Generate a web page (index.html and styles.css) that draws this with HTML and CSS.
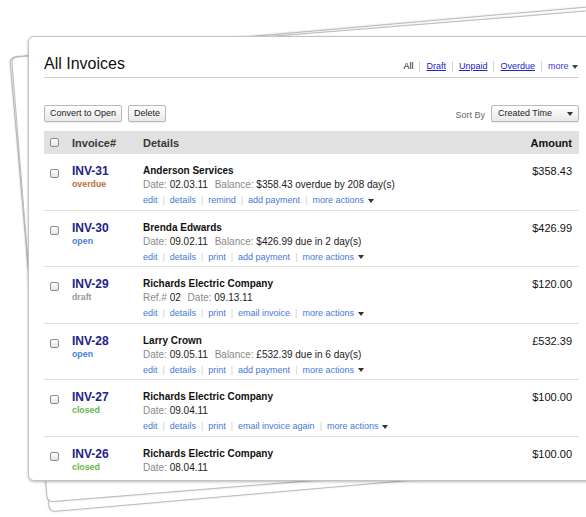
FILE: index.html
```html
<!DOCTYPE html>
<html>
<head>
<meta charset="utf-8">
<title>All Invoices</title>
<link rel="stylesheet" href="styles.css">
</head>
<body>
<div class="stack">
  <div class="sheet sheet-a"></div>
  <div class="sheet sheet-b"></div>
  <div class="card">
    <div class="content">
      <div class="title-row">
        <h1 class="title">All Invoices</h1>
        <nav class="filters">
          <span class="filter current">All</span>
          <a class="filter" href="#">Draft</a>
          <a class="filter" href="#">Unpaid</a>
          <a class="filter" href="#">Overdue</a>
          <span class="filter more">more <i class="caret"></i></span>
        </nav>
      </div>
      <div class="toolbar">
        <div class="actions">
          <button class="btn">Convert to Open</button>
          <button class="btn">Delete</button>
        </div>
        <div class="sort">
          <span class="sort-label">Sort By</span>
          <div class="select">Created Time <i class="caret dark"></i></div>
        </div>
      </div>
      <div class="table">
        <div class="row head">
          <div class="c-check"><input type="checkbox" class="cb"></div>
          <div class="c-num">Invoice#</div>
          <div class="c-det">Details</div>
          <div class="c-amt">Amount</div>
        </div>

        <div class="row">
          <div class="c-check"><input type="checkbox" class="cb"></div>
          <div class="c-num"><a class="inv" href="#">INV-31</a><div class="status overdue">overdue</div></div>
          <div class="c-det">
            <div class="cust">Anderson Services</div>
            <div class="meta"><span class="lbl">Date:</span> 02.03.11 <span class="gap"></span><span class="lbl">Balance:</span> $358.43 overdue by 208 day(s)</div>
            <div class="links"><a href="#">edit</a><span class="sep">|</span><a href="#">details</a><span class="sep">|</span><a href="#">remind</a><span class="sep">|</span><a href="#">add payment</a><span class="sep">|</span><a href="#">more actions</a> <i class="caret dark"></i></div>
          </div>
          <div class="c-amt">$358.43</div>
        </div>

        <div class="row">
          <div class="c-check"><input type="checkbox" class="cb"></div>
          <div class="c-num"><a class="inv" href="#">INV-30</a><div class="status open">open</div></div>
          <div class="c-det">
            <div class="cust">Brenda Edwards</div>
            <div class="meta"><span class="lbl">Date:</span> 09.02.11 <span class="gap"></span><span class="lbl">Balance:</span> $426.99 due in 2 day(s)</div>
            <div class="links"><a href="#">edit</a><span class="sep">|</span><a href="#">details</a><span class="sep">|</span><a href="#">print</a><span class="sep">|</span><a href="#">add payment</a><span class="sep">|</span><a href="#">more actions</a> <i class="caret dark"></i></div>
          </div>
          <div class="c-amt">$426.99</div>
        </div>

        <div class="row">
          <div class="c-check"><input type="checkbox" class="cb"></div>
          <div class="c-num"><a class="inv" href="#">INV-29</a><div class="status draft">draft</div></div>
          <div class="c-det">
            <div class="cust">Richards Electric Company</div>
            <div class="meta"><span class="lbl">Ref.#</span> 02 <span class="gap"></span><span class="lbl">Date:</span> 09.13.11</div>
            <div class="links"><a href="#">edit</a><span class="sep">|</span><a href="#">details</a><span class="sep">|</span><a href="#">print</a><span class="sep">|</span><a href="#">email invoice</a><span class="sep">|</span><a href="#">more actions</a> <i class="caret dark"></i></div>
          </div>
          <div class="c-amt">$120.00</div>
        </div>

        <div class="row">
          <div class="c-check"><input type="checkbox" class="cb"></div>
          <div class="c-num"><a class="inv" href="#">INV-28</a><div class="status open">open</div></div>
          <div class="c-det">
            <div class="cust">Larry Crown</div>
            <div class="meta"><span class="lbl">Date:</span> 09.05.11 <span class="gap"></span><span class="lbl">Balance:</span> £532.39 due in 6 day(s)</div>
            <div class="links"><a href="#">edit</a><span class="sep">|</span><a href="#">details</a><span class="sep">|</span><a href="#">print</a><span class="sep">|</span><a href="#">add payment</a><span class="sep">|</span><a href="#">more actions</a> <i class="caret dark"></i></div>
          </div>
          <div class="c-amt">£532.39</div>
        </div>

        <div class="row">
          <div class="c-check"><input type="checkbox" class="cb"></div>
          <div class="c-num"><a class="inv" href="#">INV-27</a><div class="status closed">closed</div></div>
          <div class="c-det">
            <div class="cust">Richards Electric Company</div>
            <div class="meta"><span class="lbl">Date:</span> 09.04.11</div>
            <div class="links"><a href="#">edit</a><span class="sep">|</span><a href="#">details</a><span class="sep">|</span><a href="#">print</a><span class="sep">|</span><a href="#">email invoice again</a><span class="sep">|</span><a href="#">more actions</a> <i class="caret dark"></i></div>
          </div>
          <div class="c-amt">$100.00</div>
        </div>

        <div class="row last">
          <div class="c-check"><input type="checkbox" class="cb"></div>
          <div class="c-num"><a class="inv" href="#">INV-26</a><div class="status closed">closed</div></div>
          <div class="c-det">
            <div class="cust">Richards Electric Company</div>
            <div class="meta"><span class="lbl">Date:</span> 08.04.11</div>
          </div>
          <div class="c-amt">$100.00</div>
        </div>
      </div>
    </div>
  </div>
</div>
</body>
</html>
```
FILE: styles.css
```css
html, body {
  margin: 0;
  padding: 0;
  background: #fff;
  overflow: hidden;
  height: 100%;
}
body {
  font-family: "Liberation Sans", Arial, sans-serif;
  color: #222;
}
.stack {
  position: relative;
  margin: 36px 0 0 28px;
  width: 620px;
  height: 445px;
}
.sheet {
  position: absolute;
  left: 0;
  top: 0;
  width: 600px;
  background: #fff;
  border: 1px solid #bcbcbc;
  border-radius: 6px;
  box-shadow: 0 0 2px rgba(0,0,0,0.18);
  transform-origin: 50% 50%;
}
.sheet-a {
  height: 455px;
  transform: translateY(-6px) rotate(-5deg);
}
.sheet-b {
  height: 445px;
  transform: translateY(-4px) rotate(-4.6deg);
}
.card {
  position: relative;
  z-index: 2;
  box-sizing: border-box;
  width: 620px;
  height: 445px;
  background: #fff;
  border: 1px solid #c4c4c4;
  border-radius: 6px 0 0 6px;
  box-shadow: 0 1px 3px rgba(0,0,0,0.28);
  padding: 17px 0 0 15px;
}
.content {
  width: 535px;
}
.title-row {
  display: flex;
  justify-content: space-between;
  align-items: baseline;
  border-bottom: 1px solid #cfcfcf;
  padding-bottom: 3px;
}
.title {
  margin: 0;
  font-size: 16px;
  line-height: 20px;
  font-weight: normal;
  color: #111;
}
.filters {
  display: flex;
  align-items: baseline;
  font-size: 9px;
  padding-right: 1px;
}
.filter {
  padding: 0 6px;
  border-left: 1px solid #d4d4d4;
  line-height: 11px;
  color: #2323c8;
}
.filter:first-child {
  border-left: 0;
}
.filter.current {
  color: #111;
}
.filter.more {
  color: #3a3ad0;
  padding-right: 0;
}
a.filter {
  text-decoration: underline;
}
.caret {
  display: inline-block;
  width: 0;
  height: 0;
  border-left: 3.5px solid transparent;
  border-right: 3.5px solid transparent;
  border-top: 4px solid #444;
  vertical-align: middle;
  margin-left: 1px;
}
.caret.dark {
  border-top-color: #333;
}
.toolbar {
  display: flex;
  justify-content: space-between;
  align-items: center;
  margin-top: 27px;
  height: 17px;
}
.actions {
  display: flex;
  gap: 6px;
}
.btn, .select {
  box-sizing: border-box;
  height: 17px;
  font-family: inherit;
  font-size: 9px;
  color: #222;
  background: linear-gradient(#ffffff, #e9e9e9);
  border: 1px solid #b9b9b9;
  border-radius: 2px;
  box-shadow: 0 1px 1px rgba(0,0,0,0.08);
  padding: 0 5px;
  line-height: 15px;
  margin: 0;
}
.sort {
  display: flex;
  align-items: center;
  gap: 6px;
}
.sort-label {
  font-size: 9px;
  color: #666;
  padding-top: 3px;
}
.select {
  width: 88px;
  display: flex;
  justify-content: space-between;
  align-items: center;
  padding: 0 5px 0 6px;
}
.table {
  margin-top: 9px;
}
.row {
  display: grid;
  grid-template-columns: 22px 71px 1fr auto;
  box-sizing: border-box;
  height: 56.5px;
  border-bottom: 1px solid #e0e0e0;
  padding: 10px 7px 0 6px;
}
.row.head {
  height: 23px;
  background: #e1e1e1;
  border-bottom: 0;
  padding-top: 0;
  align-items: center;
  font-size: 11px;
  font-weight: bold;
  color: #383838;
}
.row.last {
  border-bottom: 0;
}
.cb {
  appearance: none;
  -webkit-appearance: none;
  display: block;
  box-sizing: border-box;
  width: 9px;
  height: 9px;
  margin: 0;
  border: 1px solid #8c8c8c;
  border-radius: 2px;
  background: linear-gradient(#ffffff, #e4e4e4);
}
.row:not(.head) .cb {
  margin-top: 5px;
}
.c-amt {
  text-align: right;
  font-size: 11px;
  line-height: 14px;
  color: #111;
}
.inv {
  display: block;
  font-size: 12px;
  font-weight: bold;
  color: #22228a;
  text-decoration: none;
  line-height: 14px;
}
.status {
  font-size: 8.8px;
  font-weight: bold;
  line-height: 12px;
}
.status.overdue { color: #c0703a; }
.status.open { color: #4a7fcf; }
.status.draft { color: #9a9a9a; }
.status.closed { color: #66b84e; }
.cust {
  font-size: 10px;
  font-weight: bold;
  line-height: 14px;
  color: #111;
}
.meta {
  font-size: 10px;
  line-height: 13px;
  color: #222;
}
.lbl {
  color: #8a8a8a;
}
.gap {
  display: inline-block;
  width: 4px;
}
.links {
  margin-top: 3px;
  font-size: 9px;
  line-height: 12px;
}
.links a {
  color: #4778d6;
  text-decoration: none;
}
.sep {
  color: #cfcfcf;
  margin: 0 5px;
}
```
